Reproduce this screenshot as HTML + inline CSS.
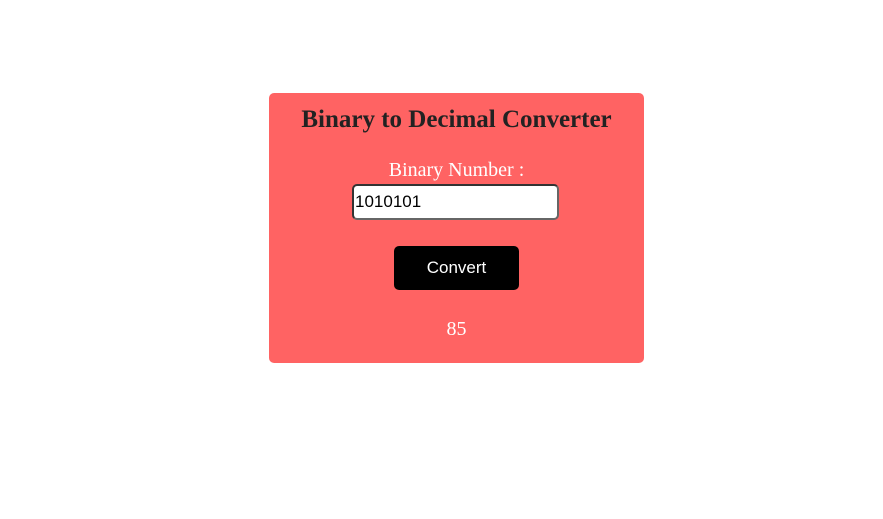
<!DOCTYPE html>
<html><head><style>
html,body{margin:0;padding:0;background:#fff;width:883px;height:519px;overflow:hidden}
.card{position:absolute;left:269px;top:93px;width:375px;height:270px;background:#ff6363;border-radius:5px}
.t{position:absolute;left:0;width:100%;text-align:center;font-family:"Liberation Serif",serif}
h1{margin:0;top:12px;font-size:25px;font-weight:bold;color:#222;line-height:30px}
.lab{top:66px;font-size:20px;color:#fff;line-height:22px}
.inp{position:absolute;left:83px;top:91px;width:207px;height:36px;background:#fff;border:2px solid #333;border-bottom-color:#666;border-right-color:#666;border-radius:5px;box-sizing:border-box;font-family:"Liberation Sans",sans-serif;font-size:17px;line-height:32px;padding-left:1px;color:#000}
.btn{position:absolute;left:125px;top:153px;width:125px;height:44px;background:#000;border-radius:5px;color:#fff;font-family:"Liberation Sans",sans-serif;font-size:17px;line-height:44px;text-align:center}
.res{top:225px;font-size:20px;color:#fff;line-height:22px}
</style></head><body>
<div class="card">
<h1 class="t">Binary to Decimal Converter</h1>
<div class="t lab">Binary Number :</div>
<div class="inp">1010101</div>
<div class="btn">Convert</div>
<div class="t res">85</div>
</div>
</body></html>
